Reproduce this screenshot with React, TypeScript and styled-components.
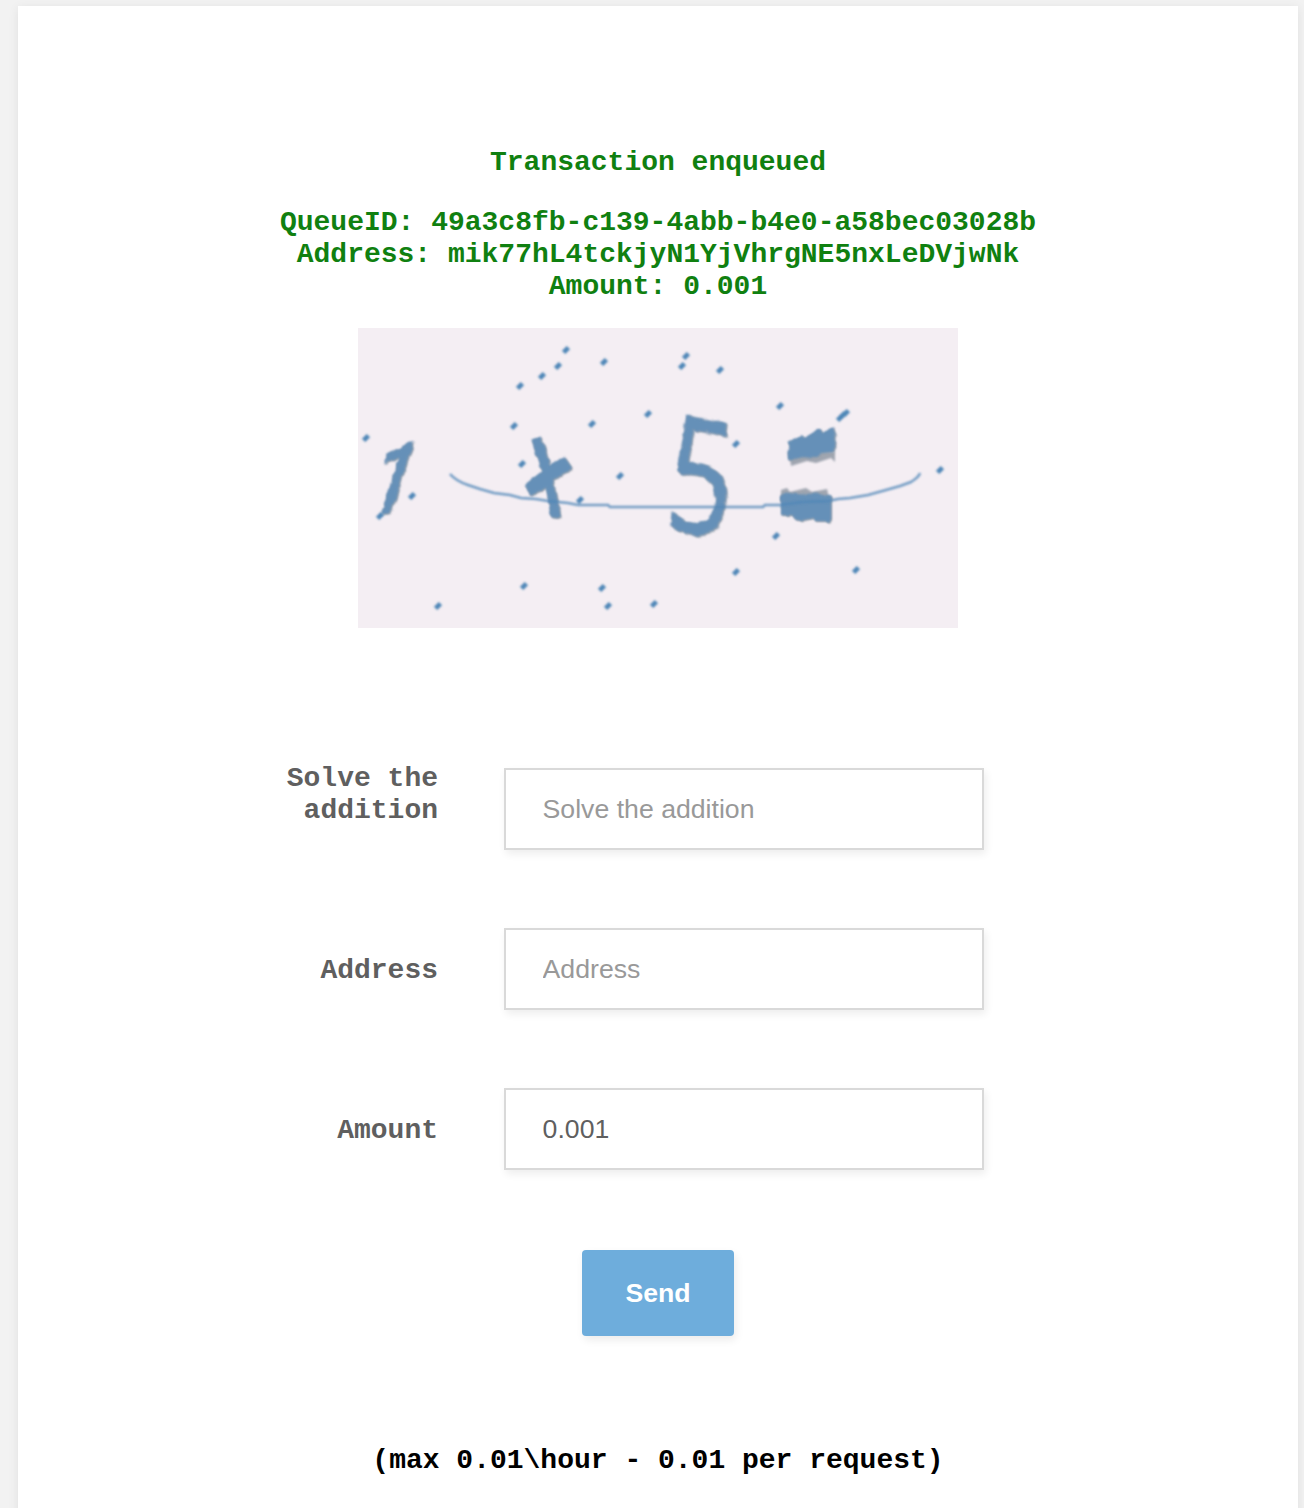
import React from 'react';
import styled, { createGlobalStyle } from 'styled-components';

const GlobalStyle = createGlobalStyle`
  * { box-sizing: border-box; }
  body {
    margin: 0;
    background: #f2f2f2;
    font-family: "Liberation Mono", "Courier New", monospace;
    overflow: hidden;
  }
`;

const Page = styled.div`
  height: 1508px;
  padding: 6px 6px 0 18px;
  overflow: hidden;
`;

const Card = styled.main`
  display: flex;
  flex-direction: column;
  align-items: center;
  height: 1600px;
  padding-top: 141px;
  background: #fff;
  box-shadow: 0 2px 10px rgba(0, 0, 0, 0.08);
  font-size: 28px;
  font-weight: 700;
  line-height: 32px;
`;

const Message = styled.p`
  margin: 0 0 28px;
  color: #108010;
  text-align: center;
  white-space: nowrap;
`;

const Details = styled(Message)`
  margin-bottom: 25px;
`;

const Captcha = styled.svg`
  display: block;
  width: 600px;
  height: 300px;
  overflow: visible;
  background: #f4eef3;
`;

const Form = styled.form`
  display: flex;
  flex-direction: column;
  align-items: center;
  width: 792px;
  padding-top: 135px;
`;

const Row = styled.div`
  display: grid;
  grid-template-columns: 176px 480px;
  column-gap: 66px;
  align-items: start;
  align-self: flex-start;
  height: 160px;
`;

const Label = styled.label<{ $lines: number }>`
  padding-top: ${(p) => (p.$lines > 1 ? 0 : 32)}px;
  color: #5f5f5f;
  text-align: right;
`;

const Input = styled.input`
  width: 480px;
  height: 82px;
  margin-top: 5px;
  padding: 0 36.6px;
  border: 2px solid #d9d9d9;
  border-radius: 0;
  outline: none;
  background: #fff;
  box-shadow: 2px 4px 8px rgba(0, 0, 0, 0.07);
  color: #5f5f5f;
  font: 400 26.67px "Liberation Sans", Arial, sans-serif;

  &::placeholder {
    color: #999;
    opacity: 1;
  }
`;

const SendButton = styled.button`
  width: 152px;
  height: 86px;
  margin-top: 7px;
  padding: 0;
  border: 0;
  border-radius: 4px;
  background: #6eaddc;
  box-shadow: 2px 4px 8px rgba(0, 0, 0, 0.08);
  color: #fff;
  font: 700 26.67px "Liberation Sans", Arial, sans-serif;
`;

const Limit = styled.p`
  margin: 109px 0 0;
  color: #000;
`;

const specks: [number, number][] = [
  [208, 22], [246, 34], [200, 38], [184, 48], [162, 58], [156, 98], [234, 96],
  [290, 86], [8, 110], [164, 136], [54, 168], [262, 148], [222, 172], [166, 258],
  [244, 260], [80, 278], [250, 278], [296, 276], [328, 28], [324, 38], [362, 42],
  [422, 78], [378, 116], [482, 90], [485, 87], [488, 85], [582, 142], [418, 208],
  [378, 244], [498, 242], [22, 188],
];

const Symbols = () => (
  <>
    <text transform="matrix(0.74 -0.06 -0.32 1 4 188)" fontFamily="Roboto" fontSize="101" fontWeight="500">1</text>
    <path d="M178 110 L190 146 L198 190" fill="none" strokeWidth="9.5" />
    <path d="M170 163 L188 149 L210 134" fill="none" strokeWidth="14" />
    <text transform="matrix(0.72 0.13 -0.1 1 305 199)" fontFamily="Open Sans" fontSize="158" fontWeight="500">5</text>
    <path stroke="none" d="M430 114 L444 107 L446 110 L461 101 L463 105 L477 98 L476 124 L462 125 L458 130 L444 129 L431 132 Z" />
    <path stroke="none" d="M422 168 L430 165 L448 167 L462 165 L473 168 L473 193 L457 193 L456 190 L445 192 L437 192 L435 187 L422 187 Z" />
  </>
);

const CaptchaImage = () => (
  <Captcha viewBox="0 0 600 300">
    <defs>
      <filter id="soft"><feGaussianBlur stdDeviation="0.8" /></filter>
      <filter id="rough" filterUnits="userSpaceOnUse" x="0" y="0" width="600" height="300" colorInterpolationFilters="sRGB">
        <feTurbulence type="fractalNoise" baseFrequency="0.11" numOctaves="2" seed="4" result="noise" />
        <feDisplacementMap in="SourceGraphic" in2="noise" scale="5" xChannelSelector="R" yChannelSelector="G" result="ink" />
        <feGaussianBlur in="ink" stdDeviation="0.8" result="softInk" />
        <feFlood floodColor="#98a1ab" />
        <feComposite in2="ink" operator="in" />
        <feOffset dx="1.2" dy="0.7" />
        <feGaussianBlur stdDeviation="1" result="fringe" />
        <feMerge>
          <feMergeNode in="fringe" />
          <feMergeNode in="softInk" />
        </feMerge>
      </filter>
    </defs>
    <g filter="url(#soft)" fill="#a0a6b0">
      <path d="M431 124 H477 L477 134 L473 130 L458 135 L449 133 L433 138 Z M423 162 L429 160 L432 164 L448 160 L454 164 L469 161 L472 174 H423 Z" />
    </g>
    <g filter="url(#rough)" fill="#6590b8" stroke="#6590b8">
      <Symbols />
    </g>
    <g filter="url(#soft)" fill="none" stroke="#4f87b7">
      <path
        d="M92 146 Q98 153 110 157 L122 161 L136 165 L152 167 L163 170 L178 171 L190 173 L210 175 L220 177 L250 177 L252 179 H405 L407 177 H422 L444 174 L471 173 L480 171 L492 170 L510 167 L528 162 L542 158 L553 154 Q561 149 562 145"
        strokeWidth="2.6"
        opacity="0.78"
      />
      {specks.map(([x, y]) => (
        <path key={`${x}-${y}`} d={`M${x - 2.4} ${y + 2.4} L${x + 2.4} ${y - 2.4}`} strokeWidth="4.8" />
      ))}
    </g>
  </Captcha>
);

export default function App() {
  return (
    <>
      <GlobalStyle />
      <Page>
        <Card>
          <Message>Transaction enqueued</Message>
          <Details>
            QueueID: 49a3c8fb-c139-4abb-b4e0-a58bec03028b
            <br />
            Address: mik77hL4tckjyN1YjVhrgNE5nxLeDVjwNk
            <br />
            Amount: 0.001
          </Details>
          <CaptchaImage />
          <Form onSubmit={(e) => e.preventDefault()}>
            <Row>
              <Label $lines={2} htmlFor="captcha">Solve the addition</Label>
              <Input id="captcha" placeholder="Solve the addition" />
            </Row>
            <Row>
              <Label $lines={1} htmlFor="address">Address</Label>
              <Input id="address" placeholder="Address" />
            </Row>
            <Row>
              <Label $lines={1} htmlFor="amount">Amount</Label>
              <Input id="amount" defaultValue="0.001" />
            </Row>
            <SendButton type="submit">Send</SendButton>
          </Form>
          <Limit>(max 0.01\hour - 0.01 per request)</Limit>
        </Card>
      </Page>
    </>
  );
}
